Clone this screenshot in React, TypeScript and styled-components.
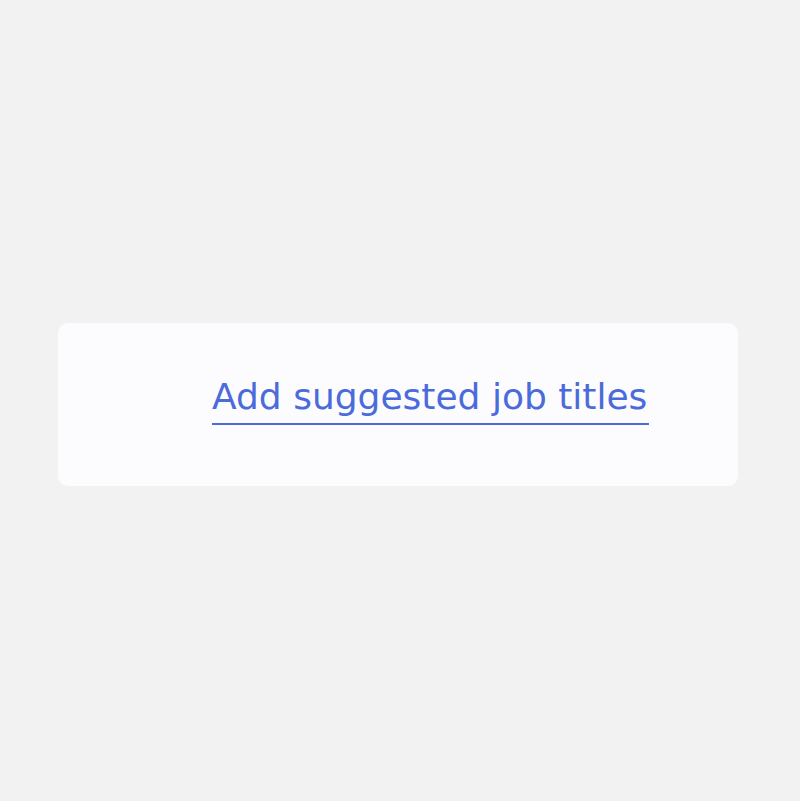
import React from 'react';
import styled, { createGlobalStyle } from 'styled-components';

const GlobalStyle = createGlobalStyle`
  html, body {
    margin: 0;
    padding: 0;
    background: #f2f2f2;
  }
`;

const Page = styled.main`
  width: 800px;
  height: 801px;
  box-sizing: border-box;
  padding: 323px 0 0 58px;
`;

const Card = styled.section`
  display: flex;
  align-items: center;
  box-sizing: border-box;
  width: 680px;
  height: 163px;
  padding: 0 0 7px 154px;
  background: #fcfcff;
  border-radius: 10px;
`;

const SuggestLink = styled.a`
  display: inline-block;
  font-family: 'DejaVu Sans', sans-serif;
  font-size: 36px;
  line-height: 40px;
  color: #4b6bdb;
  text-decoration: none;
  padding: 0 2px 6px 0;
  border-bottom: 2px solid #4b6bdb;
  cursor: pointer;
`;

export default function App() {
  return (
    <Page>
      <GlobalStyle />
      <Card>
        <SuggestLink>Add suggested job titles</SuggestLink>
      </Card>
    </Page>
  );
}
